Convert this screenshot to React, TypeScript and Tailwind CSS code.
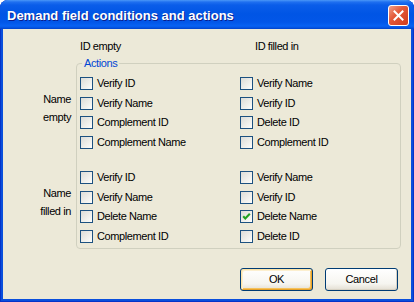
import React from 'react';

type Item = { label: string; checked?: boolean };

const groups: { title: string[]; rows: [Item, Item][] }[] = [
  {
    title: ['Name', 'empty'],
    rows: [
      [{ label: 'Verify ID' }, { label: 'Verify Name' }],
      [{ label: 'Verify Name' }, { label: 'Verify ID' }],
      [{ label: 'Complement ID' }, { label: 'Delete ID' }],
      [{ label: 'Complement Name' }, { label: 'Complement ID' }],
    ],
  },
  {
    title: ['Name', 'filled in'],
    rows: [
      [{ label: 'Verify ID' }, { label: 'Verify Name' }],
      [{ label: 'Verify Name' }, { label: 'Verify ID' }],
      [{ label: 'Delete Name' }, { label: 'Delete Name', checked: true }],
      [{ label: 'Complement ID' }, { label: 'Delete ID' }],
    ],
  },
];

function CheckBox({ label, checked }: Item) {
  return (
    <label className="flex h-[13px] items-center gap-[4px] leading-[13px]">
      <span className="flex h-[13px] w-[13px] shrink-0 items-center justify-center border border-[#1c5180] bg-[linear-gradient(135deg,#dcdcd7_0%,#f0f0ec_60%,#fdfdfc_100%)]">
        {checked && (
          <svg width="11" height="11" viewBox="0 0 11 11">
            <path d="M2.2 5.2 L4.3 7.4 L8.8 2.8" fill="none" stroke="#21a121" strokeWidth="2.1" />
          </svg>
        )}
      </span>
      <span>{label}</span>
    </label>
  );
}

function XpButton({ children, isDefault }: { children: React.ReactNode; isDefault?: boolean }) {
  return (
    <button
      className={
        'flex h-[23px] w-[73px] items-center justify-center rounded-[3px] border border-[#003c74] bg-[linear-gradient(to_bottom,#ffffff_0%,#f6f5f0_70%,#e3ded2_100%)] text-black ' +
        (isDefault
          ? 'shadow-[inset_1px_1px_0_#fde4a8,inset_-1px_-1px_0_#e8a22a,inset_2px_2px_0_#fcefcf,inset_-2px_-2px_0_#f5c25c]'
          : 'shadow-[inset_-1px_-1px_0_#d8d2c4]')
      }
    >
      {children}
    </button>
  );
}

export default function App() {
  return (
    <div className="flex h-[302px] w-[414px] flex-col overflow-hidden rounded-t-[8px] bg-[#0a4fdc] font-['Liberation_Sans',Arial,sans-serif] shadow-[inset_1px_0_#0633c8,inset_-1px_0_#0633c8,inset_0_-1px_#0633c8]">
      <div className="flex h-[29px] shrink-0 items-start justify-between bg-[linear-gradient(to_bottom,#4a97f7_0px,#1f70f0_2px,#0a5de9_5px,#0055e5_14px,#0256e8_22px,#0862f3_26px,#0450dc_28px,#0040c8_29px)] pl-[7px] pr-[5px]">
        <span className="mt-[8px] text-[13px] font-bold leading-[16px] text-white [text-shadow:1px_1px_0_#0a1e8c]">
          Demand field conditions and actions
        </span>
        <button className="mt-[5px] flex h-[21px] w-[21px] items-center justify-center rounded-[3px] border border-white bg-[linear-gradient(135deg,#f0a08a_0%,#e45a3a_40%,#cf3b1c_100%)]">
          <svg width="11" height="11" viewBox="0 0 11 11">
            <path d="M1.5 1.5 L9.5 9.5 M9.5 1.5 L1.5 9.5" stroke="#ffffff" strokeWidth="2" strokeLinecap="square" />
          </svg>
        </button>
      </div>

      <div className="mx-[3px] mb-[3px] flex flex-1 flex-col bg-[#ece9d8] pt-[11px] text-[11px] tracking-[-0.4px] text-black">
        <div className="flex h-[13px] pl-[77px] leading-[13px]">
          <span className="w-[175px]">ID empty</span>
          <span>ID filled in</span>
        </div>

        <div className="mt-[4px] flex items-start">
          <div className="flex w-[73px] flex-col pr-[5px] pt-[33px] text-right leading-[18px]">
            <div className="h-[36px]">
              <div>Name</div>
              <div>empty</div>
            </div>
            <div className="mt-[58px] h-[36px]">
              <div>Name</div>
              <div>filled in</div>
            </div>
          </div>

          <fieldset className="w-[323px] rounded-[4px] border border-[#d0d0bf] pb-[5px] pl-[3px]">
            <legend className="ml-[2px] px-[2px] leading-[13px] text-[#0046d5]">Actions</legend>
            {groups.map((g, gi) => (
              <div
                key={g.title.join(' ')}
                className={'grid grid-cols-[160px_160px] gap-y-[6.67px] ' + (gi === 0 ? 'mt-[7px]' : 'mt-[22px]')}
              >
                {g.rows.map((r, ri) => (
                  <React.Fragment key={ri}>
                    <CheckBox {...r[0]} />
                    <CheckBox {...r[1]} />
                  </React.Fragment>
                ))}
              </div>
            ))}
          </fieldset>
        </div>

        <div className="mr-[13px] mt-[19px] flex justify-end gap-[12px]">
          <XpButton isDefault>OK</XpButton>
          <XpButton>Cancel</XpButton>
        </div>
      </div>
    </div>
  );
}
